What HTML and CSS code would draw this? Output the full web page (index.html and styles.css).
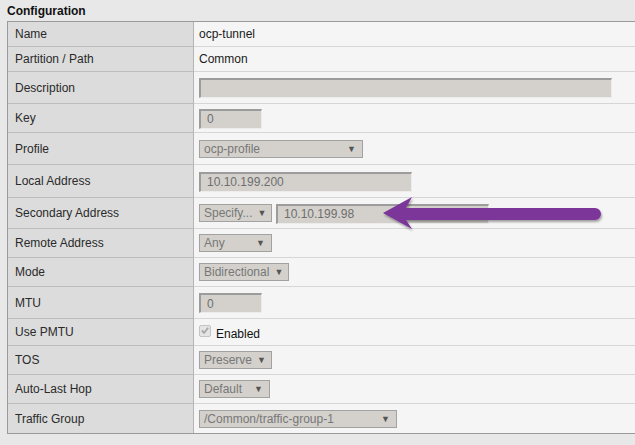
FILE: index.html
```html
<!DOCTYPE html>
<html>
<head>
<meta charset="utf-8">
<link rel="stylesheet" href="styles.css">
</head>
<body>
<div class="page">
  <div class="heading">Configuration</div>
  <div class="table">
    <div class="row h25"><div class="label">Name</div><div class="value">ocp-tunnel</div></div>
    <div class="row h25"><div class="label">Partition / Path</div><div class="value">Common</div></div>
    <div class="row h32"><div class="label">Description</div><div class="value"><span class="input w413"></span></div></div>
    <div class="row h29"><div class="label">Key</div><div class="value"><span class="input w63">0</span></div></div>
    <div class="row h32"><div class="label">Profile</div><div class="value"><span class="select w164"><span class="txt">ocp-profile</span><span class="caret">▼</span></span></div></div>
    <div class="row h33"><div class="label">Local Address</div><div class="value"><span class="input w213">10.10.199.200</span></div></div>
    <div class="row h31"><div class="label">Secondary Address</div><div class="value"><span class="select w73"><span class="txt">Specify...</span><span class="caret">▼</span></span><span class="input w213 gap">10.10.199.98</span></div></div>
    <div class="row h29"><div class="label">Remote Address</div><div class="value"><span class="select w73"><span class="txt">Any</span><span class="caret">▼</span></span></div></div>
    <div class="row h29"><div class="label">Mode</div><div class="value"><span class="select w90"><span class="txt">Bidirectional</span><span class="caret">▼</span></span></div></div>
    <div class="row h32"><div class="label">MTU</div><div class="value"><span class="input w63">0</span></div></div>
    <div class="row h27"><div class="label">Use PMTU</div><div class="value"><span class="check"><svg width="11" height="11" viewBox="0 0 11 11"><path d="M2 5.5 L4.5 8 L9 2.5" fill="none" stroke="#a8a8a8" stroke-width="2"/></svg></span><span class="enabled">Enabled</span></div></div>
    <div class="row h29"><div class="label">TOS</div><div class="value"><span class="select w73"><span class="txt">Preserve</span><span class="caret">▼</span></span></div></div>
    <div class="row h29"><div class="label">Auto-Last Hop</div><div class="value"><span class="select w71"><span class="txt">Default</span><span class="caret">▼</span></span></div></div>
    <div class="row h29 last"><div class="label">Traffic Group</div><div class="value"><span class="select w198"><span class="txt">/Common/traffic-group-1</span><span class="caret">▼</span></span></div></div>
  </div>
  <svg class="arrow" width="240" height="50" viewBox="0 0 240 50">
    <defs>
      <filter id="sh" x="-10%" y="-30%" width="120%" height="160%">
        <feDropShadow dx="1" dy="2" stdDeviation="1.2" flood-color="#000" flood-opacity="0.35"/>
      </filter>
    </defs>
    <g filter="url(#sh)" fill="#7b3599">
      <path d="M5 20 L34 4 L28 15 L217 15 A6 6 0 0 1 217 27 L28 27 L34 36 Z"/>
    </g>
  </svg>
</div>
</body>
</html>
```
FILE: styles.css
```css
html, body {
  margin: 0;
  padding: 0;
  background: #e8e8e8;
  overflow: hidden;
}
body {
  width: 635px;
  height: 445px;
  font-family: "Liberation Sans", Arial, sans-serif;
  font-size: 12px;
  color: #222;
}
.page {
  position: relative;
  height: 445px;
}
.heading {
  height: 21px;
  box-sizing: border-box;
  padding: 4px 0 0 7px;
  font-weight: bold;
  font-size: 12px;
  color: #111;
}
.table {
  margin-left: 7px;
  width: 640px;
  border: 1px solid #9a9a9a;
  border-right: none;
  display: flex;
  flex-direction: column;
}
.row {
  display: flex;
  box-sizing: border-box;
}
.h25 { height: 25px; }
.h27 { height: 27px; }
.h29 { height: 29px; }
.h31 { height: 31px; }
.h32 { height: 32px; }
.h33 { height: 33px; }
.label {
  width: 186px;
  flex: none;
  box-sizing: border-box;
  background: #dcdcdc;
  border-right: 1px solid #b4b4b4;
  border-bottom: 1px solid #bcbcbc;
  padding-left: 7px;
  display: flex;
  align-items: center;
  color: #2a2a2a;
}
.value {
  flex: 1;
  box-sizing: border-box;
  background: #f5f5f5;
  border-bottom: 1px solid #d6d6d6;
  padding-left: 5px;
  display: flex;
  align-items: center;
  color: #1a1a1a;
}
.row.last .label,
.row.last .value {
  border-bottom: none;
}
.input {
  display: inline-flex;
  align-items: center;
  box-sizing: border-box;
  height: 20px;
  background: #d4d1cc;
  border-top: 2px solid #9c9c9c;
  border-left: 2px solid #9c9c9c;
  border-right: 1px solid #ececec;
  border-bottom: 1px solid #ececec;
  padding: 0 0 0 6px;
  color: #6e6e6e;
  margin-top: 1px;
}
.gap { margin-left: 4px; }
.w63 { width: 63px; }
.w213 { width: 213px; }
.w413 { width: 413px; }
.select {
  display: inline-flex;
  align-items: center;
  justify-content: space-between;
  box-sizing: border-box;
  height: 18px;
  background: #d4d1cc;
  border: 1px solid #a2a2a2;
  padding: 0 6px 0 4px;
  color: #777;
}
.w71 { width: 71px; }
.w73 { width: 73px; }
.w90 { width: 90px; }
.w164 { width: 164px; }
.w198 { width: 198px; }
.caret {
  font-size: 9px;
  color: #555;
  margin-left: 5px;
}
.check {
  width: 12px;
  height: 12px;
  box-sizing: border-box;
  border: 1px solid #c4c4c4;
  border-radius: 2px;
  background: #e4e4e4;
  display: inline-flex;
  align-items: center;
  justify-content: center;
  margin-top: -3px;
}
.enabled {
  margin-left: 5px;
  margin-top: 3px;
  color: #111;
}
.arrow {
  position: absolute;
  left: 378px;
  top: 193px;
}
```
